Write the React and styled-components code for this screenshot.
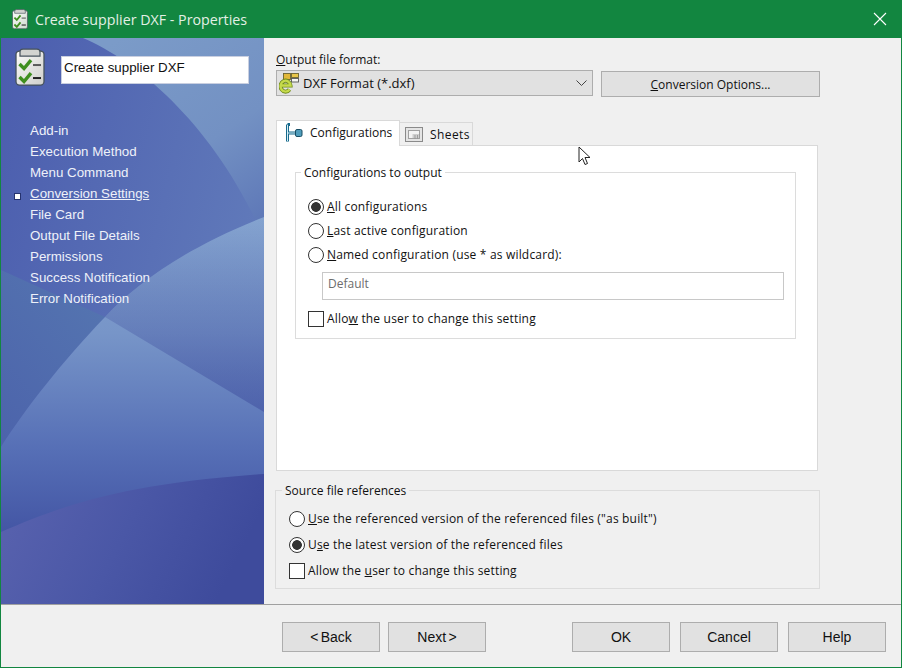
import React from "react";
import styled, { createGlobalStyle } from "styled-components";

const uiFont = `"Open Sans", "Noto Sans", sans-serif`;
const armFont = `"Liberation Sans", Arial, sans-serif`;

const GlobalStyle = createGlobalStyle`
  html, body {
    margin: 0;
    padding: 0;
    background: #f0f0f0;
  }
  * {
    box-sizing: border-box;
  }
`;

const ChecklistIcon = ({ size = 30, tint = "#eeeeea", id = "clip" }) => (
  <svg width={size} height={size * 1.27} viewBox="0 0 30 38">
    <defs>
      <linearGradient id={id} x1="0" y1="0" x2="1" y2="1">
        <stop offset="0" stopColor="#fbfbf9" />
        <stop offset="1" stopColor={tint} />
      </linearGradient>
    </defs>
    <rect x="1" y="3" width="28" height="34" rx="3.5" fill={`url(#${id})`} stroke="#46525c" strokeWidth="1.3" />
    <path d="M5 8 V4 Q5 1 8 1 H22 Q25 1 25 4 V8 Z" fill="#d2d3d0" stroke="#46525c" strokeWidth="1.2" />
    <path d="M4.5 16 L9 20.5 L16 12" fill="none" stroke="#3f8f1f" strokeWidth="3.4" />
    <path d="M4.5 29 L9 33.5 L16 25" fill="none" stroke="#3f8f1f" strokeWidth="3.4" />
    <path d="M18 17 H26" stroke="#5a5a5a" strokeWidth="2" />
    <path d="M18 30 H26" stroke="#222" strokeWidth="2" />
  </svg>
);

const SidebarArt = () => (
  <ArtSvg viewBox="0 0 263 566" preserveAspectRatio="none">
    <defs>
      <linearGradient id="base" x1="0" y1="0" x2="1" y2="0.5">
        <stop offset="0" stopColor="#4b5dae" />
        <stop offset="1" stopColor="#627cbb" />
      </linearGradient>
      <linearGradient id="corner" x1="0.2" y1="0" x2="0.8" y2="1">
        <stop offset="0" stopColor="#7b9bc8" />
        <stop offset="0.6" stopColor="#7391c3" />
        <stop offset="1" stopColor="#5f79b8" />
      </linearGradient>
      <linearGradient id="band" x1="0.7" y1="0" x2="0" y2="1">
        <stop offset="0" stopColor="#5474b0" />
        <stop offset="1" stopColor="#4c63ab" />
      </linearGradient>
      <linearGradient id="swoosh" x1="0" y1="0" x2="0" y2="1">
        <stop offset="0" stopColor="#85a4d0" />
        <stop offset="0.3" stopColor="#7795c8" />
        <stop offset="0.6" stopColor="#566fb6" />
        <stop offset="0.82" stopColor="#4355a4" />
        <stop offset="1" stopColor="#3f4e9e" />
      </linearGradient>
      <linearGradient id="shade" x1="0" y1="0" x2="0" y2="1">
        <stop offset="0" stopColor="#3f4e9e" stopOpacity="0" />
        <stop offset="1" stopColor="#3f4e9e" stopOpacity="0.55" />
      </linearGradient>
      <linearGradient id="foot" x1="0" y1="0" x2="1" y2="0.25">
        <stop offset="0" stopColor="#5a63af" />
        <stop offset="0.55" stopColor="#4a57a6" />
        <stop offset="1" stopColor="#3e4b9c" />
      </linearGradient>
    </defs>
    <rect width="263" height="566" fill="url(#base)" />
    <path d="M82 0 C140 25 215 90 263 200 L263 0 Z" fill="url(#corner)" />
    <path d="M0 232 L104 279 C60 325 25 370 0 409 Z" fill="url(#band)" />
    <path d="M263 179 C190 207 135 245 104 279 C60 325 25 370 0 409 L0 566 L263 566 Z" fill="url(#swoosh)" />
    <path d="M104 279 L263 374 L263 179 C190 207 135 245 104 279 Z" fill="url(#shade)" />
    <path d="M0 494 C60 468 120 446 263 436 L263 566 L0 566 Z" fill="url(#foot)" />
  </ArtSvg>
);

const DxfIcon = () => (
  <svg width="22" height="22" viewBox="0 0 22 22">
    <rect x="4.5" y="1.5" width="7" height="6" fill="#e2b83a" stroke="#6b6330" strokeWidth="0.9" />
    <rect x="12.5" y="1.5" width="7" height="4" fill="#e8c64a" stroke="#6b6330" strokeWidth="0.9" />
    <rect x="12.5" y="6.5" width="7" height="3.5" fill="#f6f6f2" stroke="#555" strokeWidth="0.9" />
    <path d="M2 13.5 H11.5 A5 5.5 0 1 0 10.5 17.5" fill="none" stroke="#6f8a1d" strokeWidth="4" />
    <path d="M2 13.5 H11.5 A5 5.5 0 1 0 10.5 17.5" fill="none" stroke="#c6da4b" strokeWidth="2.4" />
  </svg>
);

const ConfigIcon = () => (
  <svg width="18" height="20" viewBox="0 0 18 20">
    <path d="M2.5 1.5 H5 M2.5 1.5 V18.5 M2.5 10 H11" fill="none" stroke="#176a8c" strokeWidth="3" />
    <path d="M2.5 2 V18 M3 10 H11" fill="none" stroke="#d7eef6" strokeWidth="1" />
    <rect x="10.5" y="6.5" width="6.5" height="7" rx="1.5" fill="#4f9dbc" stroke="#174c63" />
  </svg>
);

const SheetIcon = () => (
  <svg width="18" height="15" viewBox="0 0 18 15">
    <rect x="0.5" y="0.5" width="17" height="14" fill="#e4e4e4" stroke="#8a8a8a" />
    <rect x="3.5" y="3.5" width="11" height="8" fill="#f3f3f3" stroke="#a0a0a0" />
    <path d="M7.5 8 H14.5 M7.5 10 H14.5 M10 8 V11.5 M12.5 8 V11.5" stroke="#8a8a8a" strokeWidth="0.7" />
  </svg>
);

const App = () => (
  <Window>
    <GlobalStyle />
    <TitleBar>
      <TitleLeft>
        <ChecklistIcon size={16} tint="#cfdccf" id="clipSmall" />
        <TitleText>Create supplier DXF - Properties</TitleText>
      </TitleLeft>
      <CloseGlyph width="14" height="14" viewBox="0 0 14 14">
        <path d="M1 1 L13 13 M13 1 L1 13" stroke="#fff" strokeWidth="1.1" />
      </CloseGlyph>
    </TitleBar>

    <Body>
      <Sidebar>
        <SidebarArt />
        <SideHeader>
          <ChecklistIcon size={30} tint="#cfcfcb" />
          <NameBox>Create supplier DXF</NameBox>
        </SideHeader>
        <Nav>
          <NavItem>Add-in</NavItem>
          <NavItem>Execution Method</NavItem>
          <NavItem>Menu Command</NavItem>
          <NavItem $active>Conversion Settings</NavItem>
          <NavItem>File Card</NavItem>
          <NavItem>Output File Details</NavItem>
          <NavItem>Permissions</NavItem>
          <NavItem>Success Notification</NavItem>
          <NavItem>Error Notification</NavItem>
        </Nav>
      </Sidebar>

      <Main>
        <FieldLabel>
          <u>O</u>utput file format:
        </FieldLabel>
        <FormatRow>
          <ComboBox>
            <DxfIcon />
            <ComboText>DXF Format (*.dxf)</ComboText>
            <svg width="11" height="7" viewBox="0 0 11 7">
              <path d="M0.5 0.5 L5.5 5.5 L10.5 0.5" fill="none" stroke="#444" />
            </svg>
          </ComboBox>
          <OptionsButton>
            <u>C</u>onversion Options...
          </OptionsButton>
        </FormatRow>

        <Tabs>
          <Tab $active>
            <ConfigIcon />
            Configurations
          </Tab>
          <Tab>
            <SheetIcon />
            <SheetLabel>Sheets</SheetLabel>
          </Tab>
        </Tabs>
        <TabPanel>
          <InnerGroup>
            <GroupTitle>Configurations to output</GroupTitle>
            <OptionRow>
              <Radio name="config" defaultChecked />
              <span>
                <u>A</u>ll configurations
              </span>
            </OptionRow>
            <OptionRow>
              <Radio name="config" />
              <span>
                <u>L</u>ast active configuration
              </span>
            </OptionRow>
            <OptionRow>
              <Radio name="config" />
              <span>
                <u>N</u>amed configuration (use * as wildcard):
              </span>
            </OptionRow>
            <NamedInput>Default</NamedInput>
            <OptionRow>
              <Check />
              <span>
                Allo<u>w</u> the user to change this setting
              </span>
            </OptionRow>
          </InnerGroup>
        </TabPanel>

        <SourceGroup>
          <GroupTitle>Source file references</GroupTitle>
          <OptionRow>
            <Radio name="source" />
            <span>
              <u>U</u>se the referenced version of the referenced files ("as built")
            </span>
          </OptionRow>
          <OptionRow>
            <Radio name="source" defaultChecked />
            <span>
              U<u>s</u>e the latest version of the referenced files
            </span>
          </OptionRow>
          <OptionRow>
            <Check />
            <span>
              Allow the <u>u</u>ser to change this setting
            </span>
          </OptionRow>
        </SourceGroup>

        <Cursor width="14" height="20" viewBox="0 0 14 20">
          <path d="M1 1 V16 L4.5 12.5 L7 18.5 L9.5 17.5 L7 11.5 H12 Z" fill="#fff" stroke="#222" strokeWidth="1" />
        </Cursor>
      </Main>
    </Body>

    <Footer>
      <FootGroup>
        <FootButton>&lt; Back</FootButton>
        <FootButton>Next &gt;</FootButton>
      </FootGroup>
      <FootGroup>
        <FootButton>OK</FootButton>
        <FootButton>Cancel</FootButton>
        <FootButton>Help</FootButton>
      </FootGroup>
    </Footer>
  </Window>
);

export default App;

const Window = styled.div`
  width: 902px;
  height: 668px;
  display: flex;
  flex-direction: column;
  background: #f0f0f0;
  border: 1px solid #128640;
  border-top: 0;
  font-family: ${uiFont};
  font-size: 12px;
  color: #111;
  overflow: hidden;
`;

const TitleBar = styled.div`
  height: 38px;
  flex: none;
  margin: 0 -1px;
  padding: 0 15px 0 12px;
  display: flex;
  align-items: center;
  justify-content: space-between;
  background: #128640;
`;

const TitleLeft = styled.div`
  display: flex;
  align-items: center;
  gap: 7px;
`;

const TitleText = styled.span`
  font-size: 14.25px;
  color: #e3f0e6;
`;

const CloseGlyph = styled.svg`
  display: block;
`;

const Body = styled.div`
  flex: 1;
  display: flex;
  min-height: 0;
`;

const Sidebar = styled.aside`
  position: relative;
  width: 263px;
  flex: none;
  padding: 10px 0 0 14px;
  font-family: ${armFont};
  overflow: hidden;
`;

const ArtSvg = styled.svg`
  position: absolute;
  inset: 0;
  width: 100%;
  height: 100%;
`;

const SideHeader = styled.div`
  position: relative;
  display: flex;
  align-items: flex-start;
  gap: 16px;
`;

const NameBox = styled.div`
  width: 188px;
  height: 28px;
  margin-top: 8px;
  padding: 2px;
  background: #fff;
  border: 1px solid #c9cfe0;
  font-size: 13.33px;
  line-height: 18px;
  color: #111;
`;

const Nav = styled.nav`
  position: relative;
  margin-top: 34px;
  display: flex;
  flex-direction: column;
  padding-left: 15px;
`;

const NavItem = styled.a`
  position: relative;
  height: 21px;
  font-size: 13.33px;
  line-height: 21px;
  color: #eef1f9;
  text-decoration: ${(p) => (p.$active ? "underline" : "none")};

  &::before {
    content: "";
    display: ${(p) => (p.$active ? "block" : "none")};
    position: absolute;
    left: -16px;
    top: 10px;
    width: 5px;
    height: 5px;
    background: #fff;
    border: 1px solid #26336f;
  }
`;

const Main = styled.main`
  position: relative;
  flex: 1;
  padding: 14px 0 0 12px;
  display: flex;
  flex-direction: column;
  align-items: flex-start;
`;

const FieldLabel = styled.div`
  height: 16px;
  line-height: 16px;
  margin-bottom: 2px;
`;

const FormatRow = styled.div`
  display: flex;
  align-items: flex-start;
  gap: 8px;
`;

const ComboBox = styled.div`
  width: 317px;
  height: 26px;
  padding: 0 5px 0 2px;
  display: flex;
  align-items: center;
  gap: 2px;
  background: #e1e1e1;
  border: 1px solid #adadad;
`;

const ComboText = styled.span`
  flex: 1;
  font-size: 13px;
`;

const OptionsButton = styled.button`
  width: 219px;
  height: 26px;
  margin-top: 1px;
  padding: 0;
  background: #e1e1e1;
  border: 1px solid #adadad;
  font: inherit;
  color: #111;
`;

const Tabs = styled.div`
  margin-top: 23px;
  height: 26px;
  display: flex;
  align-items: flex-end;
  position: relative;
  z-index: 1;
`;

const Tab = styled.div`
  height: ${(p) => (p.$active ? "26px" : "24px")};
  width: ${(p) => (p.$active ? "124px" : "73px")};
  padding-left: ${(p) => (p.$active ? "8px" : "5px")};
  padding-bottom: ${(p) => (p.$active ? "2px" : "0")};
  display: flex;
  align-items: center;
  gap: 7px;
  background: ${(p) => (p.$active ? "#fff" : "#f0f0f0")};
  border: 1px solid #d9d9d9;
  border-bottom: ${(p) => (p.$active ? "0" : "1px solid #d9d9d9")};
  border-left: ${(p) => (p.$active ? "1px solid #d9d9d9" : "0")};
`;

const SheetLabel = styled.span`
  letter-spacing: 0.4px;
`;

const TabPanel = styled.div`
  width: 542px;
  height: 326px;
  margin-top: -1px;
  padding: 18px 21px 0 18px;
  background: #fff;
  border: 1px solid #d9d9d9;
`;

const InnerGroup = styled.fieldset`
  width: 501px;
  margin: 0;
  padding: 19px 11px 11px 12px;
  display: flex;
  flex-direction: column;
  gap: 8px;
  border: 1px solid #dcdcdc;
`;

const SourceGroup = styled.fieldset`
  width: 545px;
  margin: 11px 0 0 -1px;
  padding: 13px 11px 9px 13px;
  display: flex;
  flex-direction: column;
  gap: 10px;
  border: 1px solid #dcdcdc;
`;

const GroupTitle = styled.legend`
  margin-left: -7px;
  padding: 0 3px;
  height: 16px;
  line-height: 18px;
`;

const OptionRow = styled.label`
  height: 16px;
  display: flex;
  align-items: center;
  gap: 3px;
  line-height: 16px;
  letter-spacing: 0.18px;
`;

const Radio = styled.input.attrs({ type: "radio" })`
  appearance: none;
  width: 16px;
  height: 16px;
  margin: 0;
  flex: none;
  border: 1px solid #333;
  border-radius: 50%;
  background: #fff;

  &:checked {
    background: radial-gradient(circle, #333 0 4.5px, #fff 5.2px);
  }
`;

const Check = styled.input.attrs({ type: "checkbox" })`
  appearance: none;
  width: 16px;
  height: 16px;
  margin: 0;
  flex: none;
  border: 1px solid #333;
  background: #fff;
`;

const NamedInput = styled.div`
  width: 462px;
  height: 28px;
  margin: 1px 0 3px 14px;
  padding: 2px 5px;
  border: 1px solid #c8c8c8;
  line-height: 18px;
  color: #6d6d6d;
`;

const Cursor = styled.svg`
  position: absolute;
  left: 314px;
  top: 108px;
`;

const Footer = styled.footer`
  height: 63px;
  flex: none;
  padding: 17px 15px 0 17px;
  display: flex;
  align-items: flex-start;
  justify-content: space-between;
  border-top: 1px solid #a0a0a0;
`;

const FootGroup = styled.div`
  margin-left: 264px;
  display: flex;
  gap: 8px;

  & + & {
    margin-left: 0;
    gap: 10px;
  }
`;

const FootButton = styled.button`
  width: 98px;
  height: 30px;
  padding: 0;
  background: #e1e1e1;
  border: 1px solid #adadad;
  font-family: ${armFont};
  font-size: 14px;
  word-spacing: -1.5px;
  color: #111;
`;
